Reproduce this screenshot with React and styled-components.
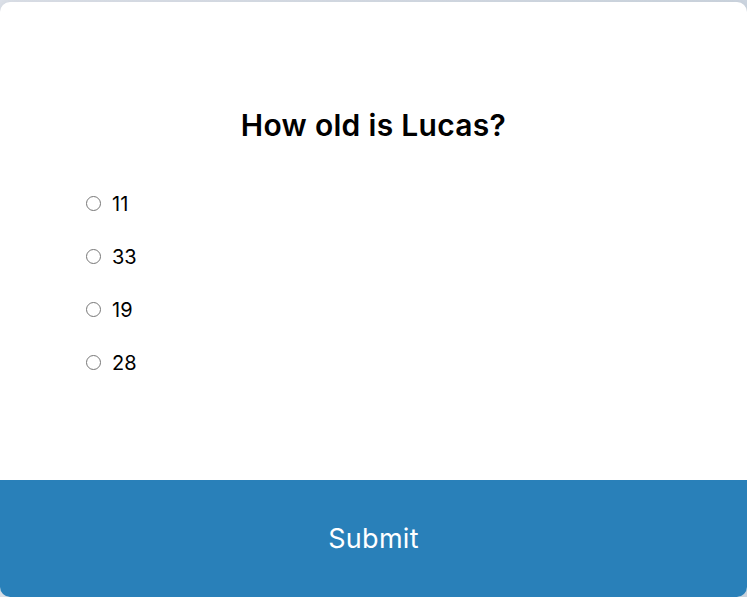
import React, { useState } from "react";
import styled, { createGlobalStyle } from "styled-components";

const GlobalStyle = createGlobalStyle`
    * {
        box-sizing: border-box;
    }
    body {
        margin: 0;
        background: linear-gradient(90deg, #dfe4ec 0%, #cfd8e3 100%);
        font-family: Inter, "Noto Sans", sans-serif;
        overflow: hidden;
    }
`;

const Page = styled.div`
    padding-top: 2px;
    height: 100vh;
`;

const QuizCard = styled.div`
    background: #fff;
    border-radius: 10px;
    height: 595px;
    display: flex;
    flex-direction: column;
    overflow: hidden;
    box-shadow: 0 0 10px 2px rgba(100, 100, 100, 0.1);
`;

const Header = styled.div`
    flex: 1;
    padding: 103px 82px 0;
`;

const Question = styled.h2`
    margin: 0 0 47px;
    text-align: center;
    color: #000;
    font-size: 30px;
    font-weight: 600;
    line-height: 40px;
    letter-spacing: 0.3px;
`;

const Options = styled.ul`
    list-style: none;
    margin: 0;
    padding: 0 0 0 4px;
    display: flex;
    flex-direction: column;
    gap: 29px;
`;

const Option = styled.li`
    display: flex;
    align-items: center;
    height: 24px;
    font-size: 20px;
    color: #000;
`;

const Radio = styled.input`
    width: 15px;
    height: 15px;
    margin: -2px 11px 0 0;
`;

const Label = styled.label`
    cursor: pointer;
`;

const SubmitButton = styled.button`
    width: 100%;
    height: 117px;
    border: 0;
    background: #2980b9;
    color: #fff;
    font-family: inherit;
    font-size: 27px;
    font-weight: 400;
    letter-spacing: 0.3px;
    padding-bottom: 2px;
    cursor: pointer;
`;

export default function App() {
    const [answer, setAnswer] = useState(null);
    const options = [
        { id: "a", text: "11" },
        { id: "b", text: "33" },
        { id: "c", text: "19" },
        { id: "d", text: "28" },
    ];

    return (
        <Page>
            <GlobalStyle />
            <QuizCard>
                <Header>
                    <Question>How old is Lucas?</Question>
                    <Options>
                        {options.map((opt) => (
                            <Option key={opt.id}>
                                <Radio
                                    type="radio"
                                    name="answer"
                                    id={opt.id}
                                    checked={answer === opt.id}
                                    onChange={() => setAnswer(opt.id)}
                                />
                                <Label htmlFor={opt.id}>{opt.text}</Label>
                            </Option>
                        ))}
                    </Options>
                </Header>
                <SubmitButton>Submit</SubmitButton>
            </QuizCard>
        </Page>
    );
}
